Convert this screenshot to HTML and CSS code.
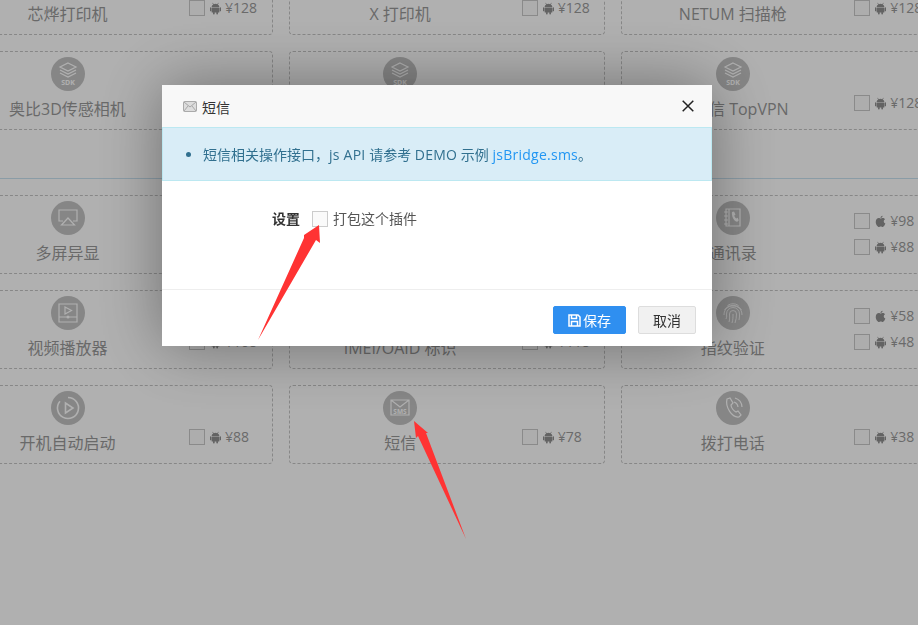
FILE: index.html
```html
<!DOCTYPE html>
<html lang="en">
<head>
    <meta charset="UTF-8">
    <title>短信</title>
    <link rel="stylesheet" href="styles.css">
</head>
<body>
    <svg class="defs" width="0" height="0">
        <symbol id="android" viewBox="0 0 12 13">
            <path d="M3 .3l1.100 1.500a4.400 4.400 0 0 1 3.800 0L9 .3l.5.3-1 1.500c1 .6 1.600 1.600 1.700 2.700H1.800c.1-1.100.7-2.100 1.700-2.700l-1-1.500z"/>
            <rect x="1.800" y="5.300" width="8.400" height="5.500" rx=".6"/>
            <rect x="0" y="5.100" width="1.500" height="4.500" rx=".75"/>
            <rect x="10.500" y="5.100" width="1.500" height="4.500" rx=".75"/>
            <rect x="3.300" y="10" width="1.800" height="3" rx=".8"/>
            <rect x="6.900" y="10" width="1.800" height="3" rx=".8"/>
        </symbol>
        <symbol id="apple" viewBox="0 0 12 13">
            <path d="M8.300.2c.1 1.300-1 2.500-2.300 2.500C5.900 1.400 7 .3 8.300.2zM6.100 3.300c.6 0 1.300-.6 2.400-.6 1 0 1.900.5 2.400 1.300-2 1.200-1.700 3.900.4 4.700-.5 1.400-1.600 3.800-2.900 3.800-.8 0-1.100-.5-2.100-.5s-1.400.5-2.100.5C2.900 12.500.8 9.800.8 7c0-2.700 1.700-4.200 3.300-4.200 1 0 1.500.5 2 .5z"/>
        </symbol>
    </svg>

    <div class="page">
        <section class="plugin-group">
            <div class="card">
                <div class="card-main"><span class="card-icon"></span><span class="card-name">芯烨打印机</span></div>
                <div class="options one">
                    <label class="option"><i class="box"></i><svg class="os"><use href="#android"/></svg>¥128</label>
                </div>
            </div>
            <div class="card">
                <div class="card-main"><span class="card-icon"></span><span class="card-name">X 打印机</span></div>
                <div class="options one">
                    <label class="option"><i class="box"></i><svg class="os"><use href="#android"/></svg>¥128</label>
                </div>
            </div>
            <div class="card">
                <div class="card-main"><span class="card-icon"></span><span class="card-name">NETUM 扫描枪</span></div>
                <div class="options one">
                    <label class="option"><i class="box"></i><svg class="os"><use href="#android"/></svg>¥128</label>
                </div>
            </div>

            <div class="card">
                <div class="card-main">
                    <span class="card-icon">
                        <svg viewBox="0 0 34 34" class="glyph"><path d="M17 6l8 4-8 4-8-4zM9 13l8 4 8-4M9 16l8 4 8-4"/><text x="17" y="28" class="glyph-text">SDK</text></svg>
                    </span>
                    <span class="card-name">奥比3D传感相机</span>
                </div>
            </div>
            <div class="card">
                <div class="card-main">
                    <span class="card-icon">
                        <svg viewBox="0 0 34 34" class="glyph"><path d="M17 6l8 4-8 4-8-4zM9 13l8 4 8-4M9 16l8 4 8-4"/><text x="17" y="28" class="glyph-text">SDK</text></svg>
                    </span>
                </div>
            </div>
            <div class="card">
                <div class="card-main">
                    <span class="card-icon">
                        <svg viewBox="0 0 34 34" class="glyph"><path d="M17 6l8 4-8 4-8-4zM9 13l8 4 8-4M9 16l8 4 8-4"/><text x="17" y="28" class="glyph-text">SDK</text></svg>
                    </span>
                    <span class="card-name">天融信 TopVPN</span>
                </div>
                <div class="options one">
                    <label class="option"><i class="box"></i><svg class="os"><use href="#android"/></svg>¥128</label>
                </div>
            </div>
        </section>

        <section class="plugin-group last">
            <div class="card">
                <div class="card-main">
                    <span class="card-icon">
                        <svg viewBox="0 0 34 34" class="glyph"><path d="M12 20H8V9h18v11h-4M17 17l6.500 7h-13z"/></svg>
                    </span>
                    <span class="card-name">多屏异显</span>
                </div>
            </div>
            <div class="card"></div>
            <div class="card">
                <div class="card-main">
                    <span class="card-icon">
                        <svg viewBox="0 0 34 34" class="glyph"><path d="M10 8h14v17H10zM13 8v17M8 11h4M8 15h4M8 19h4M8 23h4"/><path class="glyph-fill" d="M16 11l2-.6 1.500 3-1.200 1c.3 1.200 1 2.300 2 3l1.300-.7 1.200 2.600-1.500 1.500c-3.500-.3-6-6-5.300-9.800z"/></svg>
                    </span>
                    <span class="card-name">通讯录</span>
                </div>
                <div class="options">
                    <label class="option"><i class="box"></i><svg class="os"><use href="#apple"/></svg>¥98</label>
                    <label class="option"><i class="box"></i><svg class="os"><use href="#android"/></svg>¥88</label>
                </div>
            </div>

            <div class="card">
                <div class="card-main">
                    <span class="card-icon">
                        <svg viewBox="0 0 34 34" class="glyph"><path d="M8 8h18v18H8zM8 21h18M14 11v7l6.500-3.500z"/><circle class="glyph-fill" cx="17" cy="21" r="1.500"/></svg>
                    </span>
                    <span class="card-name">视频播放器</span>
                </div>
                <div class="options one">
                    <label class="option"><i class="box"></i><svg class="os"><use href="#android"/></svg>¥108</label>
                </div>
            </div>
            <div class="card">
                <div class="card-main">
                    <span class="card-icon"></span>
                    <span class="card-name">IMEI/OAID 标识</span>
                </div>
                <div class="options one">
                    <label class="option"><i class="box"></i><svg class="os"><use href="#android"/></svg>¥118</label>
                </div>
            </div>
            <div class="card">
                <div class="card-main">
                    <span class="card-icon">
                        <svg viewBox="0 0 34 34" class="glyph thin"><path d="M11.500 9.500a10 10 0 0 1 11 0M8.500 14a10 10 0 0 1 17 0M8 19c0-6 4-9 9-9s9 3 9 9M10 23c1-2 .5-4 .5-5a6.500 6.500 0 0 1 13 0c0 2 0 4-.5 6M13 26c1-3 .5-5 .5-8a3.500 3.500 0 0 1 7 0c0 3-.5 6-1.500 9M16 27c1-3 1-6 1-9"/></svg>
                    </span>
                    <span class="card-name">指纹验证</span>
                </div>
                <div class="options">
                    <label class="option"><i class="box"></i><svg class="os"><use href="#apple"/></svg>¥58</label>
                    <label class="option"><i class="box"></i><svg class="os"><use href="#android"/></svg>¥48</label>
                </div>
            </div>

            <div class="card">
                <div class="card-main">
                    <span class="card-icon">
                        <svg viewBox="0 0 34 34" class="glyph wide"><path d="M17 6.500a10.500 10.500 0 1 1-8 3.700"/><path d="M14.500 12v10l7.500-5z"/></svg>
                    </span>
                    <span class="card-name">开机自动启动</span>
                </div>
                <div class="options one">
                    <label class="option"><i class="box"></i><svg class="os"><use href="#android"/></svg>¥88</label>
                </div>
            </div>
            <div class="card">
                <div class="card-main">
                    <span class="card-icon">
                        <svg viewBox="0 0 34 34" class="glyph"><path d="M8 9h18v15H8zM8 9l9 7 9-7"/><text x="17" y="23" class="glyph-text sms">SMS</text></svg>
                    </span>
                    <span class="card-name">短信</span>
                </div>
                <div class="options one">
                    <label class="option"><i class="box"></i><svg class="os"><use href="#android"/></svg>¥78</label>
                </div>
            </div>
            <div class="card">
                <div class="card-main">
                    <span class="card-icon">
                        <svg viewBox="0 0 34 34" class="glyph"><path d="M11 8l3-1 3 5-2 2c0 3 3 6 5 7l2-1 3 4-2 2c-7 1-14-10-12-18zM18 11a6 6 0 0 1 4 5M19 7a10 10 0 0 1 7 9"/></svg>
                    </span>
                    <span class="card-name">拨打电话</span>
                </div>
                <div class="options one">
                    <label class="option"><i class="box"></i><svg class="os"><use href="#android"/></svg>¥38</label>
                </div>
            </div>
        </section>
    </div>

    <div class="backdrop"></div>

    <div class="modal">
        <div class="modal-header">
            <div class="modal-title">
                <svg class="title-icon" viewBox="0 0 14 11"><rect x=".5" y=".5" width="13" height="10" rx="1"/><path d="M1 1l6 5 6-5M1 10l4-5M13 10L9 5"/></svg>
                短信
            </div>
            <svg class="modal-close" viewBox="0 0 12 12"><path d="M.7.7l10.600 10.600M11.300.7L.7 11.300"/></svg>
        </div>
        <div class="alert">
            <ul>
                <li>短信相关操作接口，<span class="latin">js API</span> 请参考 <span class="latin">DEMO</span> 示例 <a href="#">jsBridge.sms</a>。</li>
            </ul>
        </div>
        <div class="modal-body">
            <span class="field-label">设置</span>
            <i class="box light"></i>
            <span class="field-text">打包这个插件</span>
        </div>
        <div class="modal-footer">
            <button class="btn btn-primary">
                <svg class="save-icon" viewBox="0 0 13 13"><path d="M1 1h9l2 2v9H1zM3.500 1.500v3h5v-3M3.500 12V7.500h6V12"/></svg>保存
            </button>
            <button class="btn">取消</button>
        </div>
    </div>

    <svg class="arrows" viewBox="0 0 918 625" width="918" height="625">
        <polygon points="258,340 304,238 304,235 319,225 320,243 316,240"/>
        <polygon points="466,539 418,436 416,438 414,421 428,433 426,433"/>
    </svg>
</body>
</html>
```

FILE: styles.css
```css
html, body {
    margin: 0;
    height: 100%;
    overflow: hidden;
}
body {
    font-family: "Open Sans", "Noto Sans CJK SC", sans-serif;
    font-size: 14px;
    color: #333;
    background: #fff;
}
.defs {
    position: absolute;
}
.page {
    margin: -44px 0 0 -44px;
    width: 982px;
}
.plugin-group {
    display: grid;
    grid-template-columns: repeat(3, 1fr);
    grid-auto-rows: 79px;
    gap: 16px;
    padding-bottom: 48px;
    margin-bottom: 16px;
    border-bottom: 1px solid #c9e2f1;
}
.plugin-group.last {
    border-bottom: 0;
}
.card {
    display: flex;
    box-sizing: border-box;
    border: 1px dashed #c4c4c4;
    border-radius: 4px;
}
.card-main {
    width: 221px;
    padding-top: 5px;
    display: flex;
    flex-direction: column;
    align-items: center;
}
.card-icon {
    width: 34px;
    height: 34px;
    border-radius: 50%;
    background: #c3c3c3;
    flex: none;
}
.card-name {
    margin-top: 6px;
    font-size: 16px;
    line-height: 24px;
    color: #999;
    white-space: nowrap;
}
.glyph {
    display: block;
    width: 34px;
    height: 34px;
    fill: none;
    stroke: #fff;
    stroke-width: 1.200;
}
.glyph.thin {
    stroke-width: .8;
}
.glyph.wide {
    stroke-width: 1.600;
}
.glyph-fill {
    fill: #fff;
    stroke: none;
}
.glyph-text {
    font-size: 7px;
    font-weight: 700;
    fill: #fff;
    stroke: none;
    text-anchor: middle;
}
.glyph-text.sms {
    font-size: 6.500px;
}
.options {
    margin-left: 11px;
    padding-top: 12px;
    display: flex;
    flex-direction: column;
}
.options.one {
    padding-top: 38px;
}
.option {
    display: flex;
    align-items: center;
    height: 26px;
    color: #9a9a9a;
    line-height: 16px;
}
.box {
    display: block;
    box-sizing: border-box;
    width: 16px;
    height: 16px;
    border: 1px solid #c8c8c8;
    background: #fbfbfb;
    flex: none;
}
.os {
    width: 11px;
    height: 13px;
    margin: 0 4px 0 5px;
    fill: #909090;
}
.backdrop {
    position: fixed;
    inset: 0;
    background: rgba(0, 0, 0, .31);
}
.modal {
    position: fixed;
    left: 162px;
    top: 85px;
    width: 550px;
    height: 261px;
    background: #fff;
    box-shadow: 0 0 60px rgba(0, 0, 0, .38);
    display: flex;
    flex-direction: column;
}
.modal-header {
    display: flex;
    align-items: center;
    justify-content: space-between;
    box-sizing: border-box;
    height: 42px;
    padding: 0 18px 0 21px;
    background: #f8f8f8;
}
.modal-title {
    display: flex;
    align-items: center;
    gap: 5px;
    margin-top: 1px;
    color: #333;
}
.title-icon {
    width: 14px;
    height: 11px;
    fill: #ddd;
    stroke: #999;
    stroke-width: .8;
}
.modal-close {
    width: 12px;
    height: 12px;
    stroke: #222;
    stroke-width: 1.500;
}
.alert {
    box-sizing: border-box;
    height: 54px;
    background: #d9edf7;
    border: 1px solid #bce8f1;
    color: #31708f;
    display: flex;
    align-items: center;
}
.alert ul {
    margin: 0;
    padding-left: 40px;
}
.alert .latin {
    letter-spacing: .25px;
}
.alert a {
    color: #2196f3;
    letter-spacing: .25px;
    text-decoration: none;
}
.modal-body {
    flex: 1;
    display: flex;
    align-items: flex-start;
    padding: 30px 0 0 110px;
    line-height: 16px;
}
.field-label {
    font-weight: 700;
    margin-right: 12px;
}
.box.light {
    border-color: #ccc;
    background: #fafafa;
}
.field-text {
    margin-left: 5px;
    color: #555;
}
.modal-footer {
    display: flex;
    justify-content: flex-end;
    gap: 12px;
    box-sizing: border-box;
    height: 57px;
    padding: 16px 16px 0 0;
    border-top: 1px solid #eee;
}
.btn {
    box-sizing: border-box;
    display: flex;
    align-items: center;
    justify-content: center;
    width: 58px;
    height: 28px;
    padding: 0;
    border: 1px solid #ddd;
    border-radius: 2px;
    background: #f1f1f1;
    color: #333;
    font: inherit;
}
.btn-primary {
    width: 73px;
    border-color: #2f8ff0;
    background: #2f8ff0;
    color: #fff;
}
.save-icon {
    width: 13px;
    height: 13px;
    margin-right: 2px;
    fill: none;
    stroke: #fff;
    stroke-width: 1.500;
}
.arrows {
    position: fixed;
    left: 0;
    top: 0;
    fill: #ff3333;
    pointer-events: none;
}
```
